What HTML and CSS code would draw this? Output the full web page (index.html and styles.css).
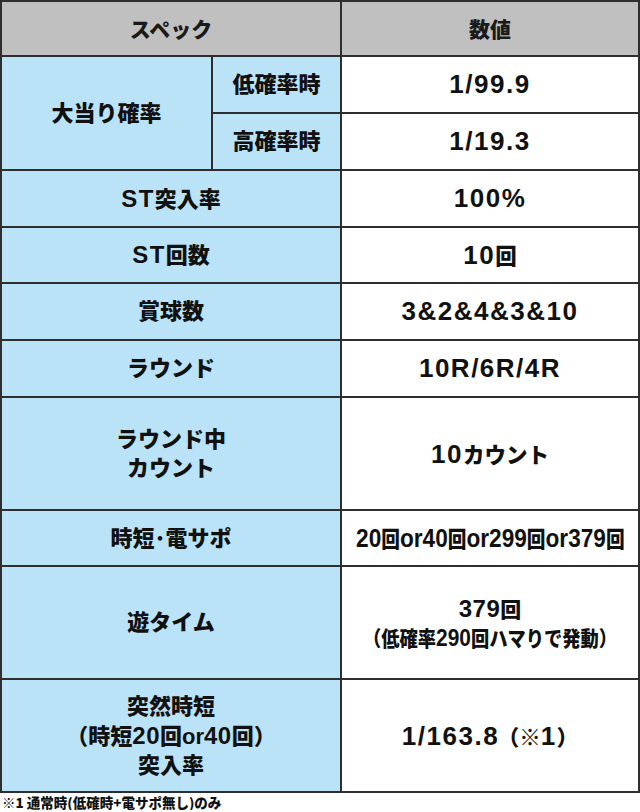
FILE: index.html
```html
<!DOCTYPE html>
<html lang="ja">
<head>
<meta charset="utf-8">
<link rel="stylesheet" href="styles.css">
</head>
<body>
<div class="spec">
  <div class="cell head span2"><div>スペック</div></div>
  <div class="cell head"><div>数値</div></div>

  <div class="cell label big-label"><div>大当り確率</div></div>
  <div class="cell label"><div>低確率時</div></div>
  <div class="cell val"><div>1/99.9</div></div>
  <div class="cell label"><div>高確率時</div></div>
  <div class="cell val"><div>1/19.3</div></div>

  <div class="cell label span2"><div><span class="lat">ST</span>突入率</div></div>
  <div class="cell val"><div>100%</div></div>

  <div class="cell label span2"><div><span class="lat">ST</span>回数</div></div>
  <div class="cell val"><div>10<span class="ja">回</span></div></div>

  <div class="cell label span2"><div>賞球数</div></div>
  <div class="cell val"><div>3&amp;2&amp;4&amp;3&amp;10</div></div>

  <div class="cell label span2"><div>ラウンド</div></div>
  <div class="cell val"><div>10R/6R/4R</div></div>

  <div class="cell label span2"><div>ラウンド中<br>カウント</div></div>
  <div class="cell val"><div>10<span class="ja">カウント</span></div></div>

  <div class="cell label span2"><div>時短･電サポ</div></div>
  <div class="cell val"><div class="squeeze">20<span class="ja">回</span>or40<span class="ja">回</span>or299<span class="ja">回</span>or379<span class="ja">回</span></div></div>

  <div class="cell label span2"><div>遊タイム</div></div>
  <div class="cell val small"><div>
    <div>379<span class="ja">回</span></div>
    <div class="squeeze"><span class="ja">（低確率</span>290<span class="ja">回ハマりで発動）</span></div>
  </div></div>

  <div class="cell label span2"><div>突然時短<br>（時短<span class="lat2">20</span>回or<span class="lat2">40</span>回）<br>突入率</div></div>
  <div class="cell val"><div>1/163.<span class="tight">8</span><span class="ja">（※</span>1<span class="ja">）</span></div></div>
</div>
<p class="note">※1 通常時(低確時+電サポ無し)のみ</p>
</body>
</html>
```

FILE: styles.css
```css
html, body {
  margin: 0;
  padding: 0;
  background: #ffffff;
}

body {
  width: 640px;
  font-family: "Liberation Sans", "Noto Sans CJK JP", sans-serif;
  font-weight: 900;
  color: #111111;
}

.spec {
  display: grid;
  grid-template-columns: 209px 127px 296px;
  grid-template-rows: 53px 55px 55px 55px 54px 55px 55px 111px 54px 111px 111px;
  gap: 2px;
  padding: 2px;
  width: 636px;
  background: #2e2e2e;
}

.cell {
  display: flex;
  align-items: center;
  justify-content: center;
  text-align: center;
  line-height: 29px;
}

.head {
  background: #c0c0c0;
  font-family: "Noto Sans CJK JP", sans-serif;
  font-size: 21px;
  color: #1a1a1a;
}

.span2 {
  grid-column: 1 / 3;
}

.label {
  background: #bbe3f8;
  font-size: 22px;
}

.label .lat {
  font-size: 24px;
  letter-spacing: 1.5px;
}

.label .lat2 {
  font-size: 24px;
  letter-spacing: 0.5px;
}

.big-label {
  grid-row: 2 / 4;
}

.val {
  background: #ffffff;
  font-size: 26px;
  letter-spacing: 1.5px;
}

.val .ja {
  font-family: "Noto Sans CJK JP", sans-serif;
  font-size: 21.5px;
  letter-spacing: 0;
}

.val .tight {
  letter-spacing: 0;
}

.val.small {
  font-size: 24px;
  letter-spacing: 0.5px;
}

.val.small .ja {
  font-size: 21px;
}

.squeeze {
  display: inline-block;
  white-space: nowrap;
  letter-spacing: 0;
  transform: scaleX(0.87);
}

.note {
  margin: 1px 0 0 2px;
  font-family: "Noto Sans CJK JP", sans-serif;
  font-size: 13.5px;
  line-height: 16px;
  color: #111111;
}
```
